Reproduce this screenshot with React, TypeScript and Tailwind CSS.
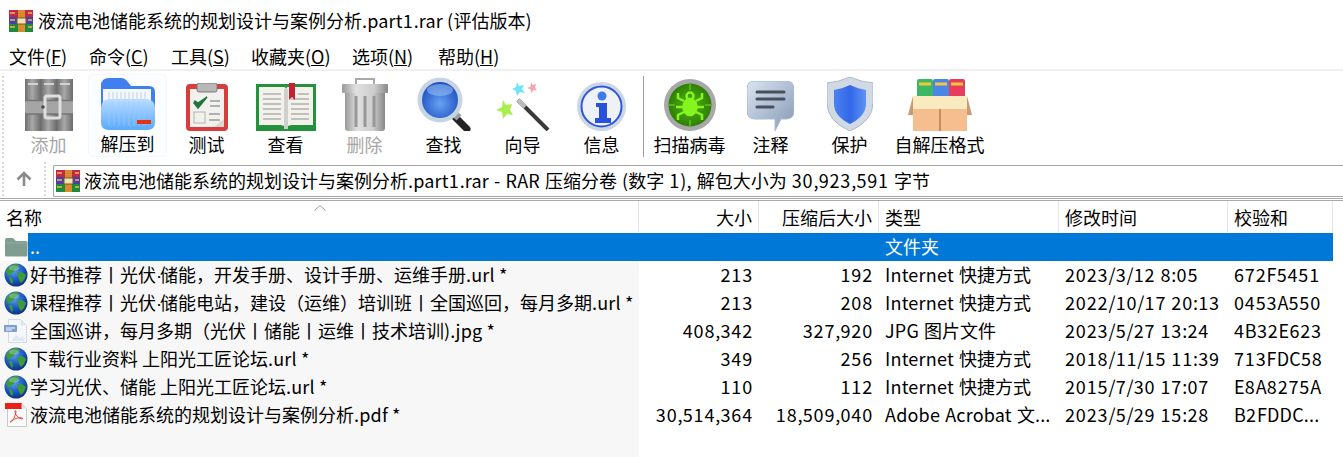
import React from "react";

const FONT = '"Noto Sans CJK SC", "Noto Sans", sans-serif';

// digits and latin runs are a bit wider in the original font
const T = ({ children }: { children: string }) => (
  <>
    {children.split(/([0-9]+|·|[A-Za-z.,/:()*-]+)/).map((part, i) => {
      if (/^[0-9]+$/.test(part)) return <span key={i} className="tracking-[0.85px]">{part}</span>;
      if (part === "·") return <span key={i} className="font-['Liberation_Sans'] tracking-[-2px]">{part}</span>;
      if (/^[A-Za-z.,/:()*-]+$/.test(part)) return <span key={i} className="tracking-[0.2px]">{part}</span>;
      return part;
    })}
  </>
);

const RarIcon = ({ size = 24 }: { size?: number }) => (
  <svg width={size} height={size} viewBox="0 0 24 24">
    <rect x="0" y="1" width="24" height="7" fill="#c02a48" />
    <rect x="0" y="8" width="24" height="7" fill="#4a3fa8" />
    <rect x="0" y="15" width="24" height="8" fill="#1f8a3c" />
    <rect x="9" y="1" width="7" height="22" fill="#d98a2b" />
    <rect x="8" y="9" width="9" height="6" fill="#f0e2c0" stroke="#7a5a20" />
    <path d="M1 4h5M1 11h5M1 18h5M19 4h4M19 11h4M19 18h4" stroke="#f2b84a" strokeWidth="1.5" />
  </svg>
);

const Globe = () => (
  <svg width="24" height="24" viewBox="0 0 24 24">
    <defs>
      <radialGradient id="globeSea" cx="40%" cy="30%" r="75%">
        <stop offset="0" stopColor="#5aa6f0" />
        <stop offset="0.6" stopColor="#1a55b8" />
        <stop offset="1" stopColor="#0c2f78" />
      </radialGradient>
    </defs>
    <circle cx="12" cy="12" r="11.5" fill="url(#globeSea)" />
    <path d="M6 3c3-2 7-2 9-1l-1 3-3 1-1 3-3 1-1 3-3-2-1-3zM13 10l5-1 4 3-2 5-3 3-2-3-1-3zM5 14l3 1 1 4-1 2-2-3z" fill="#3f9a3a" />
    <ellipse cx="10" cy="5" rx="5" ry="2.5" fill="#ffffff" opacity="0.25" />
  </svg>
);

const FolderSmall = () => (
  <svg width="24" height="20" viewBox="0 0 24 20">
    <path d="M1 3q0-2 2-2h6l3 3h10q1.500 0 1.500 1.500V18q0 1.500-1.500 1.500H2.500Q1 19.500 1 18z" fill="#7f9d90" />
    <path d="M1 6h22.500" stroke="#93ada2" strokeWidth="1" />
  </svg>
);

const JpgIcon = () => (
  <svg width="24" height="24" viewBox="0 0 24 24">
    <path d="M4.500 0.500h12l6 6v17h-18z" fill="#f4f8fd" stroke="#cfdbe8" />
    <path d="M16.500 0.500v6h6z" fill="#dce7f3" />
    <rect x="0" y="6" width="13" height="7" rx="1" fill="#7f9fd0" />
    <path d="M2 9h9M2 11h6" stroke="#ffffff" strokeWidth="1" />
    <path d="M7 22l5-6 4 3 3-2 2 5z" fill="#dfe9f6" />
  </svg>
);

const PdfIcon = () => (
  <svg width="24" height="24" viewBox="0 0 24 24">
    <path d="M3.500 0.500h14l5 5v18h-19z" fill="#fbfbfb" stroke="#c9c9c9" />
    <rect x="1" y="0" width="17" height="6" fill="#e8201a" />
    <path d="M17.500 0.500v5h5z" fill="#e2e2e2" />
    <path d="M6 19c3-1 5-5 6-10 0-2-1-2-1 0 1 4 3 6 7 7 1 0 1-1 0-1-4-1-8 1-12 4z" fill="none" stroke="#e8453e" strokeWidth="1" />
  </svg>
);

const ArchiveIcon = () => (
  <svg width="48" height="52" viewBox="0 0 48 52">
    <defs>
      <linearGradient id="bookGray" x1="0" x2="1" y1="0" y2="0">
        <stop offset="0" stopColor="#5f5f5f" />
        <stop offset="0.45" stopColor="#a0a0a0" />
        <stop offset="1" stopColor="#5c5c5c" />
      </linearGradient>
    </defs>
    <rect x="0" y="0" width="16" height="52" fill="url(#bookGray)" />
    <rect x="16" y="0" width="16" height="52" fill="url(#bookGray)" />
    <rect x="32" y="0" width="16" height="52" fill="url(#bookGray)" />
    <path d="M3 5h10M19 5h10M35 5h10" stroke="#cfcfcf" strokeWidth="2" />
    <path d="M0 24q0-3 3-3h45v14H3q-3 0-3-3z" fill="#9c9c9c" />
    <path d="M0 21.500h48M0 35h48" stroke="#666666" strokeWidth="1.500" />
    <rect x="20" y="17" width="15" height="22" rx="2" fill="none" stroke="#dcdcdc" strokeWidth="3" />
    <circle cx="18" cy="28" r="1.800" fill="#3c3c3c" />
  </svg>
);

const ExtractIcon = () => (
  <svg width="54" height="52" viewBox="0 0 54 52">
    <defs>
      <linearGradient id="folderFront" x1="0" x2="0" y1="0" y2="1">
        <stop offset="0" stopColor="#b9dcff" />
        <stop offset="1" stopColor="#5aa9fb" />
      </linearGradient>
    </defs>
    <path d="M0 8q0-8 8-8h12q4 0 7 4l3 4h18q6 0 6 6v30H0z" fill="#3f7ff0" />
    <rect x="2" y="11" width="48" height="20" fill="#f4f7fb" />
    <path d="M8 14v15M12 14v15M16 14v15M20 14v15M24 14v15M28 14v15M32 14v15M36 14v15M40 14v15M44 14v15" stroke="#c3cfdd" strokeWidth="1" />
    <path d="M0 30q0-8 8-9h38q8 1 8 9v14q0 8-8 8H8q-8 0-8-8z" fill="url(#folderFront)" />
    <path d="M8 24v24M13 24v24M18 24v24M23 24v24M28 24v24M33 24v24M38 24v24M43 24v24" stroke="#9ccbfa" strokeWidth="1" opacity="0.6" />
    <rect x="36" y="42" width="14" height="4" fill="#e8320f" />
  </svg>
);

const TestIcon = () => (
  <svg width="42" height="48" viewBox="0 0 42 48">
    <rect x="0" y="1" width="42" height="47" rx="4" fill="#d83c3c" />
    <rect x="4" y="6" width="34" height="38" fill="#f3f1ee" />
    <rect x="11" y="0" width="20" height="9" rx="2" fill="#b8b8b8" stroke="#7c7c7c" />
    <path d="M8 20l4 5 9-11-9 6-3-2z" fill="#21763a" stroke="#21763a" strokeWidth="1.500" />
    <rect x="8" y="29" width="11" height="11" fill="none" stroke="#b5b0ab" />
    <path d="M24 18h10M24 23h10M23 31h11M23 37h11" stroke="#9a9a9a" strokeWidth="1.500" />
    <path d="M38 36v8h-10z" fill="#d9d6d2" />
  </svg>
);

const ViewIcon = () => (
  <svg width="60" height="48" viewBox="0 0 60 48">
    <path d="M0 1h60v47H0z" fill="#25913f" />
    <path d="M3 4h25q2 0 2 3v38q-2-3-6-3H3zM57 4H32q-2 0-2 3v38q2-3 6-3h21z" fill="#f2f1ec" />
    <path d="M28 6h4v40h-4z" fill="#cfcfcb" />
    <path d="M7 11h18M7 16h18M7 21h18M7 26h18M7 31h18M7 36h18M35 16h18M35 21h18M35 26h18M35 31h18M35 36h18M42 11h11" stroke="#b0b0ac" strokeWidth="1.500" />
    <path d="M33 0h6v17l-3-3-3 3z" fill="#c8202f" />
  </svg>
);

const TrashIcon = () => (
  <svg width="46" height="54" viewBox="0 0 46 54">
    <defs>
      <linearGradient id="metal" x1="0" x2="1" y1="0" y2="0">
        <stop offset="0" stopColor="#8e8e8e" />
        <stop offset="0.3" stopColor="#dedede" />
        <stop offset="0.7" stopColor="#c8c8c8" />
        <stop offset="1" stopColor="#7c7c7c" />
      </linearGradient>
    </defs>
    <path d="M14 8V2h18v6" fill="none" stroke="#a0a0a0" strokeWidth="2" />
    <rect x="0" y="7" width="46" height="9" rx="1" fill="url(#metal)" />
    <path d="M3 16h40v35q0 3-3 3H6q-3 0-3-3z" fill="url(#metal)" />
    <path d="M14 19v31M23 19v31M32 19v31" stroke="#8d8d8d" strokeWidth="3" />
  </svg>
);

const SearchIcon = () => (
  <svg width="54" height="54" viewBox="0 0 54 54">
    <defs>
      <radialGradient id="lens" cx="50%" cy="60%" r="60%">
        <stop offset="0" stopColor="#67a2f5" />
        <stop offset="1" stopColor="#1d50bd" />
      </radialGradient>
    </defs>
    <path d="M35 37l15 15" stroke="#222222" strokeWidth="7" strokeLinecap="round" />
    <path d="M37 36l5 5" stroke="#9aa0a6" strokeWidth="7" />
    <circle cx="23" cy="23" r="22.500" fill="#c6d4e3" />
    <circle cx="23" cy="23" r="18" fill="url(#lens)" />
    <ellipse cx="23" cy="13" rx="13" ry="6" fill="#9cc2f7" opacity="0.55" />
  </svg>
);

const WizardIcon = () => (
  <svg width="54" height="52" viewBox="0 0 54 52">
    <path d="M22 21l30 30" stroke="#3a3a3a" strokeWidth="4" />
    <path d="M22 21l7 7" stroke="#bcbcbc" strokeWidth="4" />
    <path d="M7 21l3 5 6-1-2 6 3 5-6-1-4 5-1-7-6-2 6-3z" fill="#a8ee4c" />
    <path d="M18 2l2 4 5-1-2 4 3 4-5-1-3 4-1-5-4-2 4-2z" transform="translate(3 1)" fill="#6fe3f7" />
    <path d="M35 3l1.500 3 3.500-1-1 3.500 2 3-3.500-.5-2 3-1-3.500-3-1.500 3-1.500z" fill="#f7a6ad" />
  </svg>
);

const InfoIcon = () => (
  <svg width="49" height="49" viewBox="0 0 49 49">
    <circle cx="24.500" cy="24.500" r="24.500" fill="#cdd6e4" />
    <circle cx="24.500" cy="24.500" r="20" fill="#eef1f6" stroke="#2f57de" strokeWidth="2" />
    <circle cx="25" cy="14" r="4.500" fill="#3f7be8" />
    <path d="M19 21h11v15h4v5H18v-5h4V25h-3z" fill="#2850dc" />
  </svg>
);

const VirusIcon = () => (
  <svg width="54" height="52" viewBox="0 0 54 52">
    <defs>
      <radialGradient id="virusBg" cx="50%" cy="50%" r="55%">
        <stop offset="0" stopColor="#55b515" />
        <stop offset="1" stopColor="#2a7a05" />
      </radialGradient>
    </defs>
    <circle cx="27" cy="26" r="26" fill="#a8a8a8" />
    <circle cx="27" cy="26" r="21.500" fill="url(#virusBg)" />
    <path d="M27 5v6M27 41v6M6 26h6M42 26h6" stroke="#5fc21c" strokeWidth="1.500" />
    <g fill="none" stroke="#85f51f" strokeWidth="2.500">
      <ellipse cx="27" cy="28" rx="6.500" ry="8" fill="#85f51f" />
      <circle cx="27" cy="17" r="3.500" />
      <path d="M21 22l-6-3v-5M33 22l6-3v-5M20 28h-7M34 28h7M21 33l-6 3v5M33 33l6 3v5" />
    </g>
  </svg>
);

const CommentIcon = () => (
  <svg width="47" height="50" viewBox="0 0 47 50">
    <defs>
      <linearGradient id="bubble" x1="0" x2="1" y1="0" y2="1">
        <stop offset="0" stopColor="#dbe5f2" />
        <stop offset="1" stopColor="#8498b4" />
      </linearGradient>
    </defs>
    <path d="M8 0h31q8 0 8 8v22q0 8-8 8h-5L28 50V38H8q-8 0-8-8V8q0-8 8-8z" fill="url(#bubble)" stroke="#a8bcd8" />
    <path d="M10 11h27M10 18h27M10 26h16" stroke="#48505c" strokeWidth="3" strokeLinecap="round" />
  </svg>
);

const ShieldIcon = () => (
  <svg width="46" height="54" viewBox="0 0 46 54">
    <defs>
      <linearGradient id="shieldBlue" x1="0" x2="1" y1="0" y2="0">
        <stop offset="0" stopColor="#4a83f0" />
        <stop offset="0.5" stopColor="#3368e8" />
        <stop offset="1" stopColor="#5d93f5" />
      </linearGradient>
    </defs>
    <path d="M23 0q11 5 23 6v20q0 18-23 28Q0 44 0 26V6q12-1 23-6z" fill="#d1d9e5" stroke="#aab8cc" />
    <path d="M23 8q8 4 16 5v14q0 12-16 20Q7 39 7 27V13q8-1 16-5z" fill="url(#shieldBlue)" />
  </svg>
);

const SfxIcon = () => (
  <svg width="64" height="52" viewBox="0 0 64 52">
    <path d="M9 2q0-2 2-2h12q2 0 2 2v22H9z" fill="#3cb864" />
    <path d="M25 2q0-2 2-2h12q2 0 2 2v22H25z" fill="#4a86e8" />
    <path d="M41 2q0-2 2-2h12q2 0 2 2v22H41z" fill="#e83c5c" />
    <path d="M11 5h12M27 5h12M43 5h12" stroke="#f4c63c" strokeWidth="3" />
    <path d="M5 17h54l5 19H57V21H7v15H0z" fill="#c99a75" />
    <path d="M5 17h54v13H5z" fill="#faeabf" />
    <path d="M5 30h54v22H5z" fill="#f6bd8e" />
    <path d="M31 30h2v22h-2z" fill="#c98a5d" />
  </svg>
);

const Grip = () => (
  <div className="flex h-full w-[2px] shrink-0 flex-col gap-[2px] overflow-hidden py-[2px]">
    {Array.from({ length: 22 }).map((_, i) => (
      <span key={i} className="h-[2px] w-[2px] shrink-0 bg-[#d8d8d8]" />
    ))}
  </div>
);

const tools = [
  { label: "添加", icon: <ArchiveIcon />, off: true, w: "w-[79px]" },
  { label: "解压到", icon: <ExtractIcon />, hover: true, w: "w-[79px]" },
  { label: "测试", icon: <TestIcon />, w: "w-[79px]" },
  { label: "查看", icon: <ViewIcon />, w: "w-[79px]" },
  { label: "删除", icon: <TrashIcon />, off: true, w: "w-[79px]" },
  { label: "查找", icon: <SearchIcon />, w: "w-[79px]" },
  { label: "向导", icon: <WizardIcon />, w: "w-[79px]" },
  { label: "信息", icon: <InfoIcon />, w: "w-[79px]" },
];

const tools2 = [
  { label: "扫描病毒", icon: <VirusIcon />, w: "w-[83px]" },
  { label: "注释", icon: <CommentIcon />, w: "w-[79px]" },
  { label: "保护", icon: <ShieldIcon />, w: "w-[79px]" },
  { label: "自解压格式", icon: <SfxIcon />, w: "w-[101px]" },
];

const rows = [
  { name: "好书推荐丨光伏·储能，开发手册、设计手册、运维手册.url *", icon: <Globe />, size: "213", packed: "192", type: "Internet 快捷方式", time: "2023/3/12 8:05", crc: "672F5451" },
  { name: "课程推荐丨光伏·储能电站，建设（运维）培训班丨全国巡回，每月多期.url *", icon: <Globe />, size: "213", packed: "208", type: "Internet 快捷方式", time: "2022/10/17 20:13", crc: "0453A550" },
  { name: "全国巡讲，每月多期（光伏丨储能丨运维丨技术培训).jpg *", icon: <JpgIcon />, size: "408,342", packed: "327,920", type: "JPG 图片文件", time: "2023/5/27 13:24", crc: "4B32E623" },
  { name: "下载行业资料 上阳光工匠论坛.url *", icon: <Globe />, size: "349", packed: "256", type: "Internet 快捷方式", time: "2018/11/15 11:39", crc: "713FDC58" },
  { name: "学习光伏、储能 上阳光工匠论坛.url *", icon: <Globe />, size: "110", packed: "112", type: "Internet 快捷方式", time: "2015/7/30 17:07", crc: "E8A8275A" },
  { name: "液流电池储能系统的规划设计与案例分析.pdf *", icon: <PdfIcon />, size: "30,514,364", packed: "18,509,040", type: "Adobe Acrobat 文...", time: "2023/5/29 15:28", crc: "B2FDDC..." },
];

const Tool = ({ label, icon, off, hover, w }: { label: string; icon: React.ReactNode; off?: boolean; hover?: boolean; w: string }) => (
  <div className={`flex h-[83px] shrink-0 flex-col items-center justify-end ${w} ${hover ? "rounded-sm border border-[#f4f8fd] bg-[#fcfdff]" : ""}`}>
    <div className={`flex h-[58px] items-end justify-center ${off ? "opacity-90" : ""}`}>{icon}</div>
    <span className={`mt-[1px] h-[25px] leading-[25px] ${off ? "text-[#a6a6a6]" : "text-black"}`}>{label}</span>
  </div>
);

const Header = ({ label, w, right }: { label: string; w: string; right?: boolean }) => (
  <div className={`flex h-full shrink-0 items-center border-r border-[#e5e5e5] px-[6px] ${w} ${right ? "justify-end" : ""}`}>{label}</div>
);

const Cell = ({ children, w, right }: { children: string; w: string; right?: boolean }) => (
  <div className={`h-[28px] shrink-0 px-[6px] leading-[26px] ${w} ${right ? "text-right" : ""}`}>
    <T>{children}</T>
  </div>
);

export default function App() {
  return (
    <div className="flex h-[457px] w-[1343px] flex-col overflow-hidden bg-white text-[18px] text-black [word-spacing:1px]" style={{ fontFamily: FONT }}>
      <div className="flex h-[42px] shrink-0 items-center pl-[9px]">
        <RarIcon />
        <span className="ml-[5px] pb-[2px] [word-spacing:0px]">
          <T>液流电池储能系统的规划设计与案例分析.part1.rar (评估版本)</T>
        </span>
      </div>

      <div className="flex h-[29px] shrink-0 items-center border-b-2 border-[#f0f0f0] pt-[1px]">
        <span className="ml-[9px] w-[80px]">文件(<u>F</u>)</span>
        <span className="w-[82px]">命令(<u>C</u>)</span>
        <span className="w-[80px]">工具(<u>S</u>)</span>
        <span className="w-[101px]">收藏夹(<u>O</u>)</span>
        <span className="w-[86px]">选项(<u>N</u>)</span>
        <span>帮助(<u>H</u>)</span>
      </div>

      <div className="flex h-[89px] shrink-0 items-start pt-[3px] pl-[2px]">
        <Grip />
        <div className="ml-[5px] flex">
          {tools.map((t) => (
            <Tool key={t.label} {...t} />
          ))}
        </div>
        <div className="mt-[2px] ml-[2px] h-[81px] w-[1px] bg-[#a0a0a0]" />
        <div className="ml-[4px] flex">
          {tools2.map((t) => (
            <Tool key={t.label} {...t} />
          ))}
        </div>
      </div>

      <div className="flex h-[41px] shrink-0 items-start border-b-[3px] border-double border-[#a8a8a8]">
        <div className="flex h-[37px] w-[53px] shrink-0 items-center pl-[2px]">
          <Grip />
          <svg className="ml-[11px]" width="18" height="18" viewBox="0 0 18 18">
            <path d="M9 16V3M2.500 9.500L9 3l6.500 6.500" fill="none" stroke="#8a8a8a" strokeWidth="2.600" />
          </svg>
          <div className="ml-[11px] h-full">
            <Grip />
          </div>
        </div>
        <div className="mt-[5px] flex h-[32px] flex-1 items-center rounded-l-[2px] border border-r-0 border-[#a5a5a5] pl-[2px]">
          <RarIcon />
          <span className="ml-[4px] whitespace-nowrap pb-[2px]">
            <T>液流电池储能系统的规划设计与案例分析.part1.rar - RAR 压缩分卷 (数字 1), 解包大小为 30,923,591 字节</T>
          </span>
        </div>
      </div>

      <div className="relative flex h-[32px] shrink-0 items-center">
        <svg className="absolute top-[3px] left-[313px]" width="14" height="8" viewBox="0 0 14 8">
          <path d="M1.500 6.500L7 1.500l5.500 5" fill="none" stroke="#a0a0a0" strokeWidth="1" />
        </svg>
        <Header label="名称" w="w-[639px]" />
        <Header label="大小" w="w-[120px]" right />
        <Header label="压缩后大小" w="w-[120px]" right />
        <Header label="类型" w="w-[180px]" />
        <Header label="修改时间" w="w-[169px]" />
        <Header label="校验和" w="w-[105px]" />
      </div>

      <div className="flex h-[28px] shrink-0 items-center">
        <div className="flex h-full w-[28px] shrink-0 items-center pl-[4px]">
          <FolderSmall />
        </div>
        <div className="flex h-full w-[1305px] items-center bg-[#0078d7] pb-[2px] text-white">
          <div className="w-[851px] shrink-0 px-[2px]">..</div>
          <div className="px-[6px]">文件夹</div>
        </div>
      </div>

      <div className="relative flex-1">
        <div className="absolute inset-y-0 left-0 w-[639px] bg-[#f7f7f7]" />
        {rows.map((r) => (
          <div key={r.crc} className="relative flex h-[28px] items-start whitespace-nowrap">
            <div className="flex h-[28px] w-[639px] shrink-0 items-start pl-[4px] leading-[26px]">
              <span className="flex h-[28px] w-[26px] shrink-0 items-center">{r.icon}</span>
              <span className="[word-spacing:0px]">
                <T>{r.name}</T>
              </span>
            </div>
            <Cell w="w-[120px]" right>{r.size}</Cell>
            <Cell w="w-[120px]" right>{r.packed}</Cell>
            <Cell w="w-[180px]">{r.type}</Cell>
            <Cell w="w-[169px]">{r.time}</Cell>
            <Cell w="w-[105px]">{r.crc}</Cell>
          </div>
        ))}
      </div>
    </div>
  );
}
